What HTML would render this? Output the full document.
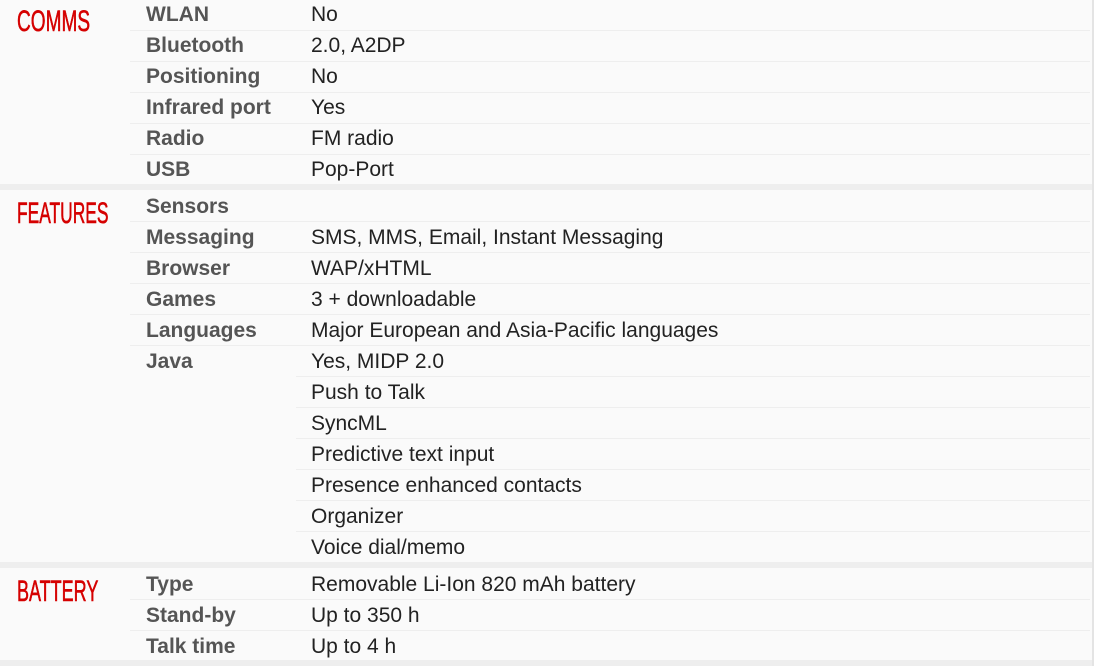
<!DOCTYPE html><html><head><style>
body{margin:0;width:1094px;height:666px;background:#fafafa;position:relative;overflow:hidden;font-family:"Liberation Sans",sans-serif}
.bar{position:absolute;left:0;width:1092px;background:#eee}
.ln{position:absolute;left:130px;width:960px;height:1px;background:#eee}
.h{position:absolute;left:17px;color:#d50000;font-size:30px;transform-origin:0 0;-webkit-text-stroke:0.6px #d50000}
.l{position:absolute;left:146px;font-weight:bold;color:#555;font-size:21px;line-height:24px}
.v{position:absolute;left:311px;color:#222;font-size:21px;line-height:24px}
.edge{position:absolute;right:0;top:0;width:2px;height:666px;background:#e4e4e4}
</style></head><body>
<div class="edge"></div>
<div class="bar" style="top:184px;height:6px"></div>
<div class="bar" style="top:562px;height:6px"></div>
<div class="bar" style="top:660px;height:6px"></div>
<div class="h" style="top:5px;transform:scaleX(.635)">COMMS</div>
<div class="h" style="top:197px;transform:scaleX(.58)">FEATURES</div>
<div class="h" style="top:575px;transform:scaleX(.60)">BATTERY</div>
<div class="ln" style="top:30px"></div><div class="ln" style="top:61px"></div><div class="ln" style="top:92px"></div><div class="ln" style="top:123px"></div><div class="ln" style="top:154px"></div>
<div class="l" style="top:3px">WLAN</div><div class="v" style="top:3px">No</div>
<div class="l" style="top:34px">Bluetooth</div><div class="v" style="top:34px">2.0, A2DP</div>
<div class="l" style="top:65px">Positioning</div><div class="v" style="top:65px">No</div>
<div class="l" style="top:96px">Infrared port</div><div class="v" style="top:96px">Yes</div>
<div class="l" style="top:127px">Radio</div><div class="v" style="top:127px">FM radio</div>
<div class="l" style="top:158px">USB</div><div class="v" style="top:158px">Pop-Port</div>
<div class="ln" style="top:221px"></div><div class="ln" style="top:252px"></div><div class="ln" style="top:283px"></div><div class="ln" style="top:314px"></div><div class="ln" style="top:345px"></div>
<div class="ln" style="top:376px;left:296px;width:794px"></div><div class="ln" style="top:407px;left:296px;width:794px"></div><div class="ln" style="top:438px;left:296px;width:794px"></div><div class="ln" style="top:469px;left:296px;width:794px"></div><div class="ln" style="top:500px;left:296px;width:794px"></div><div class="ln" style="top:531px;left:296px;width:794px"></div>
<div class="l" style="top:195px">Sensors</div>
<div class="l" style="top:226px">Messaging</div><div class="v" style="top:226px">SMS, MMS, Email, Instant Messaging</div>
<div class="l" style="top:257px">Browser</div><div class="v" style="top:257px">WAP/xHTML</div>
<div class="l" style="top:288px">Games</div><div class="v" style="top:288px">3 + downloadable</div>
<div class="l" style="top:319px">Languages</div><div class="v" style="top:319px">Major European and Asia-Pacific languages</div>
<div class="l" style="top:350px">Java</div><div class="v" style="top:350px">Yes, MIDP 2.0</div>
<div class="v" style="top:381px">Push to Talk</div>
<div class="v" style="top:412px">SyncML</div>
<div class="v" style="top:443px">Predictive text input</div>
<div class="v" style="top:474px">Presence enhanced contacts</div>
<div class="v" style="top:505px">Organizer</div>
<div class="v" style="top:536px">Voice dial/memo</div>
<div class="ln" style="top:599px"></div><div class="ln" style="top:630px"></div>
<div class="l" style="top:573px">Type</div><div class="v" style="top:573px">Removable Li-Ion 820 mAh battery</div>
<div class="l" style="top:604px">Stand-by</div><div class="v" style="top:604px">Up to 350 h</div>
<div class="l" style="top:635px">Talk time</div><div class="v" style="top:635px">Up to 4 h</div>
</body></html>
